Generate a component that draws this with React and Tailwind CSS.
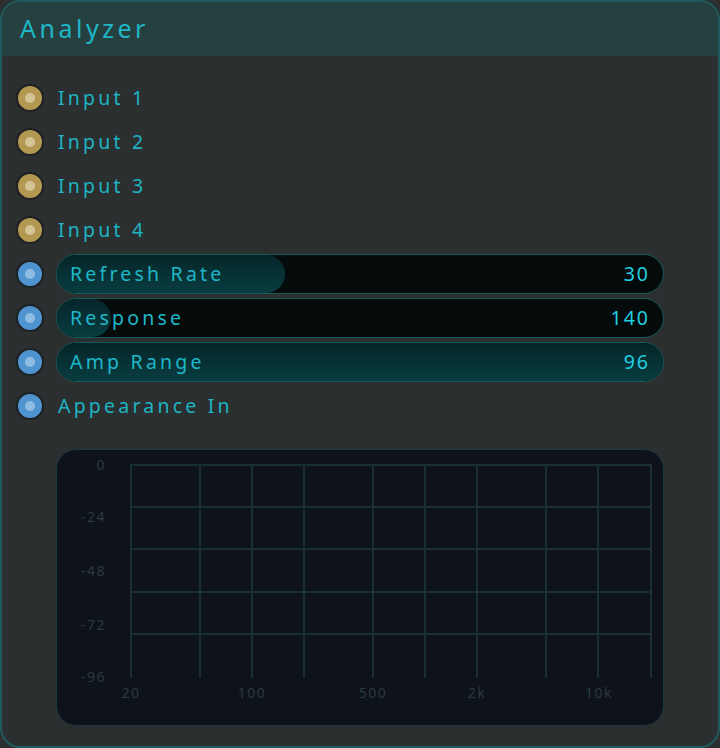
import React from 'react';

const font = { fontFamily: '"Noto Sans", "Open Sans", sans-serif' };

const Knob = ({ kind }) => (
    <div
        className={
            'w-[28px] h-[28px] rounded-full border-2 border-[#1c2224] flex items-center justify-center shrink-0 ' +
            (kind === 'gold' ? 'bg-[#b39852]' : 'bg-[#4f93cf]')
        }
    >
        <div className={'w-[10px] h-[10px] rounded-full ' + (kind === 'gold' ? 'bg-[#d6c597]' : 'bg-[#8fbde3]')} />
    </div>
);

const Slider = ({ label, value, fill }) => (
    <div className="relative flex-1 -ml-[2px] h-[40px] rounded-full border border-[#155a5c] bg-[#050a0b] overflow-hidden">
        <div
            className="absolute left-0 top-0 bottom-0 rounded-full bg-gradient-to-b from-[#062529] to-[#083d40]"
            style={{ width: fill }}
        />
        <div className="relative h-full flex items-center justify-between pl-[13px] pr-[13px] text-[19.5px] tracking-[3.2px] text-[#1fb7c7]">
            <span>{label}</span>
            <span className="text-[#22d0e0] tracking-[2px]">{value}</span>
        </div>
    </div>
);

const Row = ({ kind, children }) => (
    <div className="h-[44px] flex items-center gap-[14px] pl-[14px] pr-[54px]">
        <Knob kind={kind} />
        {children}
    </div>
);

const Label = ({ children }) => (
    <span className="text-[19.5px] tracking-[3.2px] text-[#1fb3c3]">{children}</span>
);

const xs = [130, 199, 251, 303, 372, 424, 476, 545, 597, 650];
const ys = [464, 506, 548, 591, 633];

const Graph = () => (
    <div className="mx-[54px] mt-[21px] h-[277px] rounded-[20px] border border-[#1b3b3e] bg-[#0e121a] overflow-hidden">
        <svg width="608" height="277" viewBox="56 449 608 277">
            {ys.map((y) => (
                <line key={'h' + y} x1="130" x2="650" y1={y} y2={y} stroke="#19302f" strokeWidth="2" />
            ))}
            {xs.map((x) => (
                <line key={'v' + x} x1={x} x2={x} y1="463" y2="677" stroke="#19302f" strokeWidth="2" />
            ))}
            <g fill="#2a3b3e" fontSize="14" letterSpacing="1.5" style={font} textAnchor="end">
                <text x="105" y="469">0</text>
                <text x="105" y="521">-24</text>
                <text x="105" y="575">-48</text>
                <text x="105" y="629">-72</text>
                <text x="105" y="681">-96</text>
            </g>
            <g fill="#2a3b3e" fontSize="14" letterSpacing="1.5" style={font} textAnchor="middle">
                <text x="130" y="697">20</text>
                <text x="251" y="697">100</text>
                <text x="372" y="697">500</text>
                <text x="476" y="697">2k</text>
                <text x="598" y="697">10k</text>
            </g>
        </svg>
    </div>
);

export default function App() {
    return (
        <div className="w-[720px] h-[748px] bg-[#2b2f30]" style={font}>
            <div className="w-full h-full rounded-[20px] border-2 border-[#1f5b5c] overflow-hidden bg-[#2b2f30] flex flex-col">
                <div className="h-[54px] bg-[#26403f] flex items-center pl-[18px]">
                    <span className="text-[25px] tracking-[3.5px] text-[#1fb7c7]">Analyzer</span>
                </div>
                <div className="pt-[20px]">
                    <Row kind="gold"><Label>Input 1</Label></Row>
                    <Row kind="gold"><Label>Input 2</Label></Row>
                    <Row kind="gold"><Label>Input 3</Label></Row>
                    <Row kind="gold"><Label>Input 4</Label></Row>
                    <Row kind="blue"><Slider label="Refresh Rate" value="30" fill="228px" /></Row>
                    <Row kind="blue"><Slider label="Response" value="140" fill="54px" /></Row>
                    <Row kind="blue"><Slider label="Amp Range" value="96" fill="100%" /></Row>
                    <Row kind="blue"><Label>Appearance In</Label></Row>
                </div>
                <Graph />
            </div>
        </div>
    );
}
